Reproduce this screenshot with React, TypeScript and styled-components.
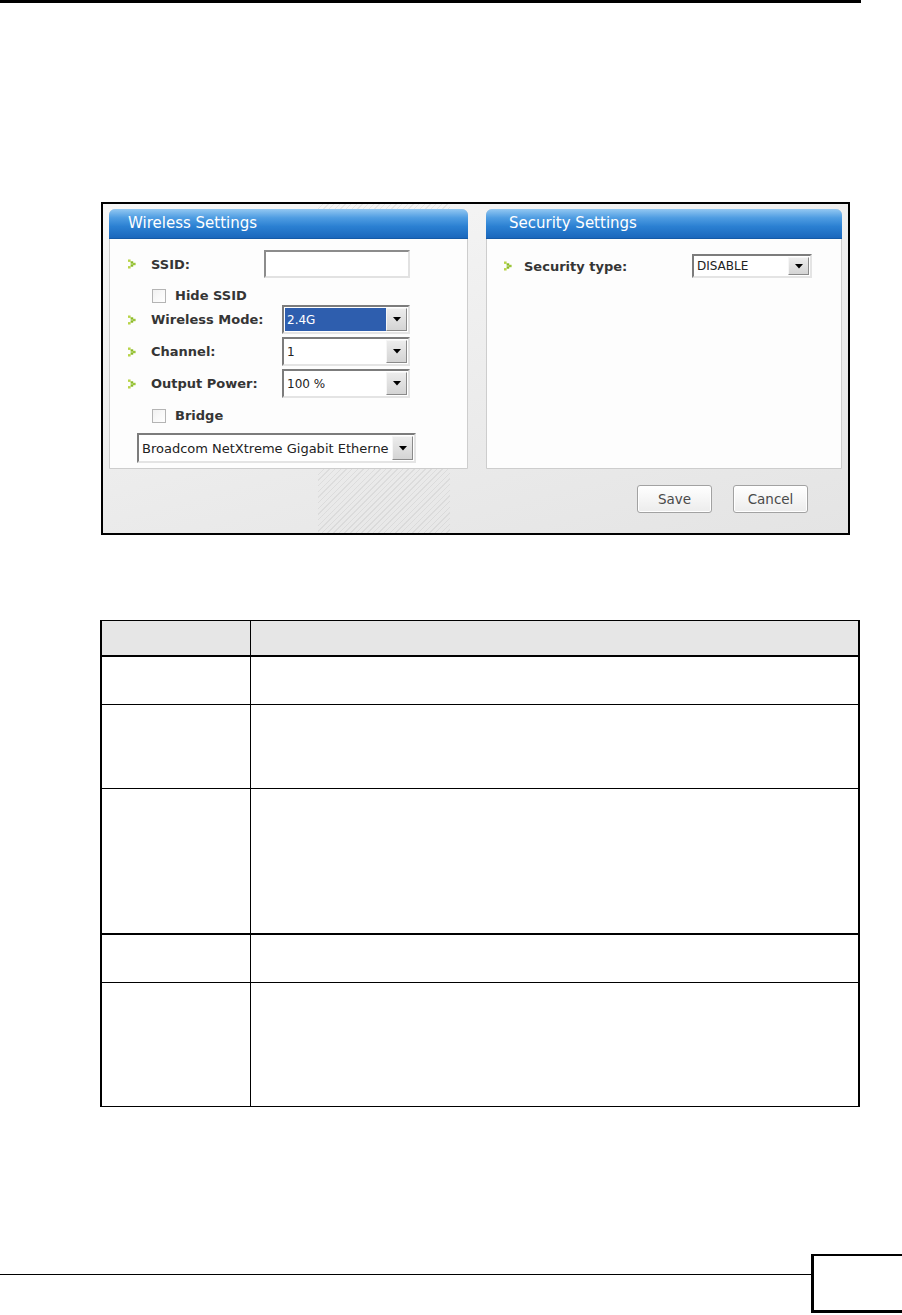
import React from 'react'
import styled, { createGlobalStyle } from 'styled-components'

const GlobalStyle = createGlobalStyle`
  html, body {
    margin: 0;
    padding: 0;
    background: #fff;
  }
  body {
    font-family: "DejaVu Sans", Verdana, sans-serif;
    overflow-x: hidden;
  }
`

const Page = styled.div`
  width: 902px;
  min-height: 1315px;
`

const TopRule = styled.div`
  width: 861px;
  height: 3px;
  background: #000;
`

const Frame = styled.div`
  box-sizing: border-box;
  width: 749px;
  height: 333px;
  margin: 199px 0 0 101px;
  border: 2px solid #000;
  padding: 5px 6px 0;
  background-color: #ececec;
  background-image: repeating-linear-gradient(
      135deg,
      rgba(255, 255, 255, 0) 0 3px,
      rgba(0, 0, 0, 0.06) 3px 4px
    ),
    linear-gradient(165deg, #f7f7f7 0%, #ebebeb 60%, #e4e4e4 100%);
  background-size: 132px 100%, 100% 100%;
  background-position: 215px 0, 0 0;
  background-repeat: no-repeat;
`

const PanelRow = styled.div`
  display: flex;
  gap: 18px;
`

const Panel = styled.section<{ $w: number }>`
  box-sizing: border-box;
  width: ${(p) => p.$w}px;
  height: 260px;
  background: #fdfdfd;
  border: 1px solid #cdcdcd;
  border-radius: 6px 6px 0 0;
  display: flex;
  flex-direction: column;
`

const PanelHead = styled.div<{ $inset: number }>`
  height: 29px;
  margin: -1px -1px 0;
  border-radius: 6px 6px 0 0;
  background: linear-gradient(#93c8f2 0%, #4f9de2 30%, #2b80d2 60%, #1a67bc 100%);
  border-bottom: 1px solid #155aa6;
  color: #fff;
  font-size: 15px;
  line-height: 29px;
  padding-left: ${(p) => p.$inset}px;
  white-space: nowrap;
`

const PanelBody = styled.div<{ $pad: string }>`
  padding: ${(p) => p.$pad};
  display: flex;
  flex-direction: column;
`

const FieldRow = styled.div<{ $h: number; $mt?: number }>`
  display: flex;
  align-items: center;
  justify-content: space-between;
  height: ${(p) => p.$h}px;
  margin-top: ${(p) => p.$mt ?? 0}px;
`

const LabelGroup = styled.div<{ $gap: number }>`
  display: flex;
  align-items: center;
  gap: ${(p) => p.$gap}px;
`

const Label = styled.span`
  font-weight: bold;
  font-size: 13px;
  color: #353535;
  white-space: nowrap;
`

const CheckRow = styled.label`
  display: flex;
  align-items: center;
  gap: 9px;
  height: 15px;
  margin: 10px 0 0 24px;
  font-weight: bold;
  font-size: 13px;
  color: #353535;
`

const CheckBox = styled.span`
  box-sizing: border-box;
  width: 14px;
  height: 14px;
  border: 1px solid #b4b4b4;
  background: linear-gradient(135deg, #f1f1f1, #fff);
`

const TextInput = styled.div`
  box-sizing: border-box;
  width: 146px;
  height: 28px;
  background: #fff;
  border: 2px solid;
  border-color: #8c8c8c #e2e2e2 #e2e2e2 #8c8c8c;
`

const SelectBox = styled.div<{ $w: number; $h: number; $ml?: number; $mt?: number }>`
  box-sizing: border-box;
  width: ${(p) => p.$w}px;
  height: ${(p) => p.$h}px;
  margin-left: ${(p) => p.$ml ?? 0}px;
  margin-top: ${(p) => p.$mt ?? 0}px;
  display: flex;
  padding: 1px;
  background: #fff;
  border: 2px solid;
  border-color: #7c7c7c #e4e4e4 #e4e4e4 #7c7c7c;
`

const SelectValue = styled.div<{ $on?: boolean; $size: number }>`
  flex: 1;
  display: flex;
  align-items: center;
  padding-left: 2px;
  overflow: hidden;
  white-space: nowrap;
  font-size: ${(p) => p.$size}px;
  background: ${(p) => (p.$on ? '#2e5eae' : '#fff')};
  color: ${(p) => (p.$on ? '#fff' : '#222')};
`

const SelectButton = styled.div`
  box-sizing: border-box;
  width: 21px;
  display: flex;
  align-items: center;
  justify-content: center;
  border: 1px solid;
  border-color: #f6f6f6 #8a8a8a #8a8a8a #f6f6f6;
  background: linear-gradient(#ececec, #d4d4d4);
`

const ButtonRow = styled.div`
  display: flex;
  justify-content: flex-end;
  gap: 21px;
  margin-top: 16px;
  padding-right: 34px;
`

const Button = styled.button`
  box-sizing: border-box;
  width: 75px;
  height: 28px;
  padding: 0;
  border: 1px solid #a2a2a2;
  border-radius: 3px;
  background: linear-gradient(#ffffff, #ececec);
  box-shadow: inset 0 0 0 1px #fff;
  font-family: "DejaVu Sans", Verdana, sans-serif;
  font-size: 13.5px;
  color: #4a4a4a;
`

const Table = styled.table`
  margin: 85px 0 0 100px;
  width: 760px;
  border-collapse: collapse;
  table-layout: fixed;
  border-top: 1px solid #000;
  border-bottom: 1px solid #000;
  border-left: 2px solid #000;
  border-right: 2px solid #000;
`

const Row = styled.tr<{ $h: number }>`
  height: ${(p) => p.$h}px;
`

const Cell = styled.td<{ $head?: boolean; $heavy?: boolean }>`
  padding: 0;
  border: 1px solid #000;
  border-bottom-width: ${(p) => (p.$heavy ? 2 : 1)}px;
  background: ${(p) => (p.$head ? '#e6e6e6' : '#fff')};
`

const Footer = styled.div`
  display: flex;
  align-items: flex-start;
  margin-top: 147px;
`

const FooterRule = styled.div`
  flex: 1;
  height: 1px;
  margin-top: 20px;
  background: #000;
`

const PageBox = styled.div`
  box-sizing: border-box;
  width: 91px;
  height: 59px;
  border: 3px solid #000;
  border-top-width: 2px;
  border-right: none;
`

const Bullet = () => (
  <svg width="8" height="10" viewBox="0 0 8 10">
    <rect x="0" y="0.5" width="2.6" height="2.4" fill="#b8d447" />
    <rect x="2.6" y="2.3" width="2.6" height="2.4" fill="#8aba26" />
    <rect x="5" y="3.8" width="2.6" height="2.4" fill="#9cc63a" />
    <rect x="2.6" y="5.3" width="2.6" height="2.4" fill="#8aba26" />
    <rect x="0" y="7.1" width="2.6" height="2.4" fill="#b8d447" />
  </svg>
)

const Caret = () => (
  <svg width="8" height="5" viewBox="0 0 8 5">
    <polygon points="0,0 8,0 4,4.5" fill="#000" />
  </svg>
)

interface SelectProps {
  value: string
  w: number
  h: number
  ml?: number
  mt?: number
  size?: number
  on?: boolean
}

const Select: React.FC<SelectProps> = ({ value, w, h, ml, mt, size = 12, on }) => (
  <SelectBox $w={w} $h={h} $ml={ml} $mt={mt}>
    <SelectValue $on={on} $size={size}>
      {value}
    </SelectValue>
    <SelectButton>
      <Caret />
    </SelectButton>
  </SelectBox>
)

const Field: React.FC<{ label: string; gap?: number }> = ({ label, gap = 15 }) => (
  <LabelGroup $gap={gap}>
    <Bullet />
    <Label>{label}</Label>
  </LabelGroup>
)

const rows = [
  { h: 49 },
  { h: 84 },
  { h: 145, heavy: true },
  { h: 49 },
  { h: 124 },
]

const App: React.FC = () => (
  <Page>
    <GlobalStyle />
    <TopRule />
    <Frame>
      <PanelRow>
        <Panel $w={359}>
          <PanelHead $inset={19}>Wireless Settings</PanelHead>
          <PanelBody $pad="11px 57px 0 18px">
            <FieldRow $h={28}>
              <Field label="SSID:" />
              <TextInput />
            </FieldRow>
            <CheckRow>
              <CheckBox />
              Hide SSID
            </CheckRow>
            <FieldRow $h={29} $mt={2}>
              <Field label="Wireless Mode:" />
              <Select value="2.4G" w={128} h={29} on />
            </FieldRow>
            <FieldRow $h={29} $mt={3}>
              <Field label="Channel:" />
              <Select value="1" w={128} h={29} />
            </FieldRow>
            <FieldRow $h={29} $mt={3}>
              <Field label="Output Power:" />
              <Select value="100 %" w={128} h={29} />
            </FieldRow>
            <CheckRow>
              <CheckBox />
              Bridge
            </CheckRow>
            <Select
              value="Broadcom NetXtreme Gigabit Etherne"
              w={279}
              h={30}
              ml={9}
              mt={10}
              size={13}
            />
          </PanelBody>
        </Panel>
        <Panel $w={356}>
          <PanelHead $inset={23}>Security Settings</PanelHead>
          <PanelBody $pad="15px 29px 0 17px">
            <FieldRow $h={24}>
              <Field label="Security type:" gap={12} />
              <Select value="DISABLE" w={120} h={24} />
            </FieldRow>
          </PanelBody>
        </Panel>
      </PanelRow>
      <ButtonRow>
        <Button>Save</Button>
        <Button>Cancel</Button>
      </ButtonRow>
    </Frame>

    <Table>
      <colgroup>
        <col style={{ width: 149 }} />
        <col />
      </colgroup>
      <tbody>
        <Row $h={35}>
          <Cell $head $heavy />
          <Cell $head $heavy />
        </Row>
        {rows.map((r, i) => (
          <Row key={i} $h={r.h}>
            <Cell $heavy={r.heavy} />
            <Cell $heavy={r.heavy} />
          </Row>
        ))}
      </tbody>
    </Table>

    <Footer>
      <FooterRule />
      <PageBox />
    </Footer>
  </Page>
)

export default App
